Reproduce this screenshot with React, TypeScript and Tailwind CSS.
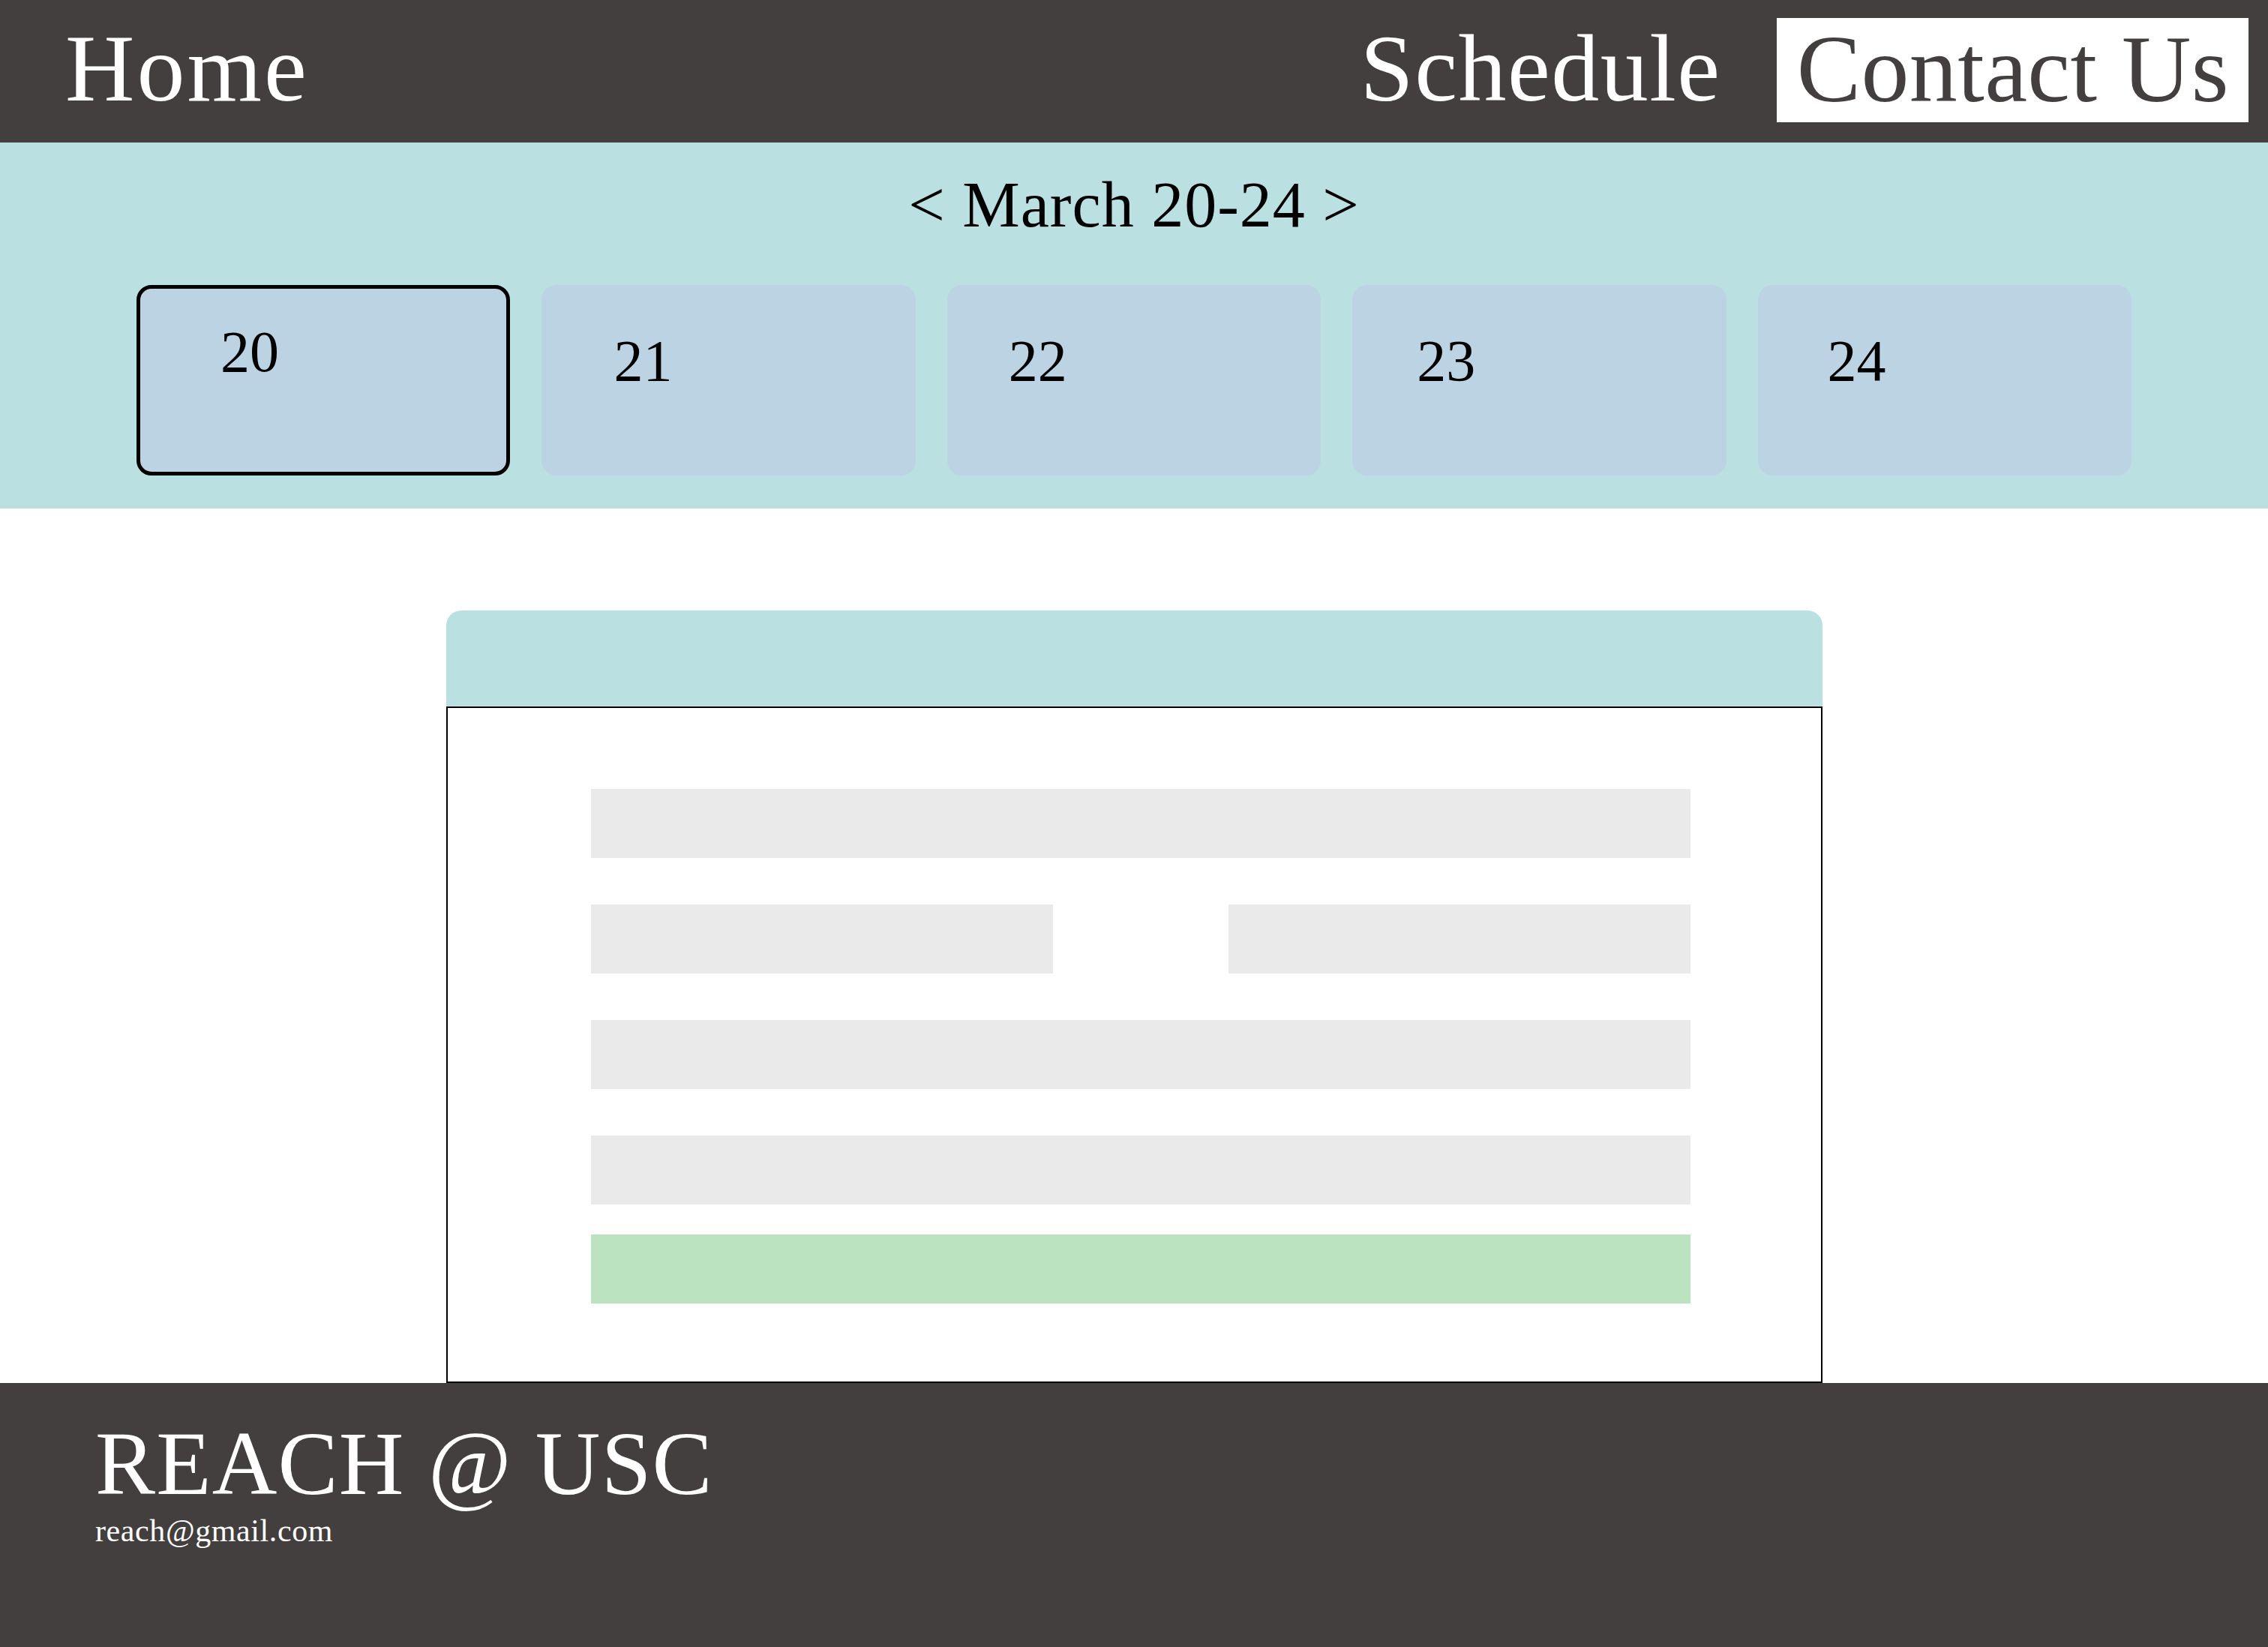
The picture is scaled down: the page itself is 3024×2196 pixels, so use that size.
const days = [
    { n: "20", pl: "pl-[107px]", pt: "pt-[45px]", active: true },
    { n: "21", pl: "pl-[96px]", pt: "pt-[62px]", active: false },
    { n: "22", pl: "pl-[82px]", pt: "pt-[62px]", active: false },
    { n: "23", pl: "pl-[86px]", pt: "pt-[62px]", active: false },
    { n: "24", pl: "pl-[93px]", pt: "pt-[62px]", active: false },
];

export default function App() {
    return (
        <div className="min-h-screen bg-white font-['Liberation_Serif',serif]">
            {/* Top nav */}
            <header className="h-[190px] bg-[#433f3e] flex items-start justify-between pt-[24px] pl-[87px] pr-[26px]">
                <a className="mt-[3px] text-[128px] leading-none tracking-[3px] text-white">Home</a>
                <nav className="flex items-start">
                    <a className="mt-[3px] mr-[74px] text-[128px] leading-none tracking-[1.5px] text-white">Schedule</a>
                    <a className="h-[139px] bg-white pl-[27px] pr-[26px] pt-[4px] text-[128px] leading-none tracking-[0.4px] text-[#433f3e]">Contact Us</a>
                </nav>
            </header>

            {/* Week picker */}
            <section className="h-[488px] bg-[#bae0e1] pt-[40px]">
                <h2 className="text-center text-[86px] leading-none tracking-[1px] text-black">&lt; March 20-24 &gt;</h2>
                <div className="grid grid-cols-5 gap-[42px] px-[182px] mt-[64px]">
                    {days.map((d) => (
                        <div key={d.n}
                            className={`h-[254px] rounded-[20px] bg-[#bbd3e2] ${d.pl} ${d.pt} ${d.active ? "border-[5px] border-black" : ""}`}>
                            <span className="text-[78px] leading-none text-black">{d.n}</span>
                        </div>
                    ))}
                </div>
            </section>

            {/* Contact form */}
            <main className="pt-[136px]">
                <div className="mx-auto w-[1835px]">
                    <div className="h-[128px] rounded-t-[20px] bg-[#bae0e1]" />
                    <div className="border-2 border-black pt-[108px] pb-[104px] pl-[191px] pr-[174px]">
                        <div className="flex flex-col gap-[62px]">
                            <div className="h-[92px] bg-[#eaeaea]" />
                            <div className="flex justify-between">
                                <div className="h-[92px] w-[616px] bg-[#eaeaea]" />
                                <div className="h-[92px] w-[616px] bg-[#eaeaea]" />
                            </div>
                            <div className="h-[92px] bg-[#eaeaea]" />
                            <div className="h-[92px] bg-[#eaeaea]" />
                        </div>
                        <div className="mt-[40px] h-[92px] bg-[#bbe3c0]" />
                    </div>
                </div>
            </main>

            {/* Footer */}
            <footer className="h-[352px] bg-[#433f3e] pt-[48px] pl-[127px] text-white">
                <div className="text-[120px] leading-none tracking-[1.2px]">REACH @ USC</div>
                <div className="mt-[8px] text-[42px] leading-none tracking-[0.6px]">reach@gmail.com</div>
            </footer>
        </div>
    );
}
